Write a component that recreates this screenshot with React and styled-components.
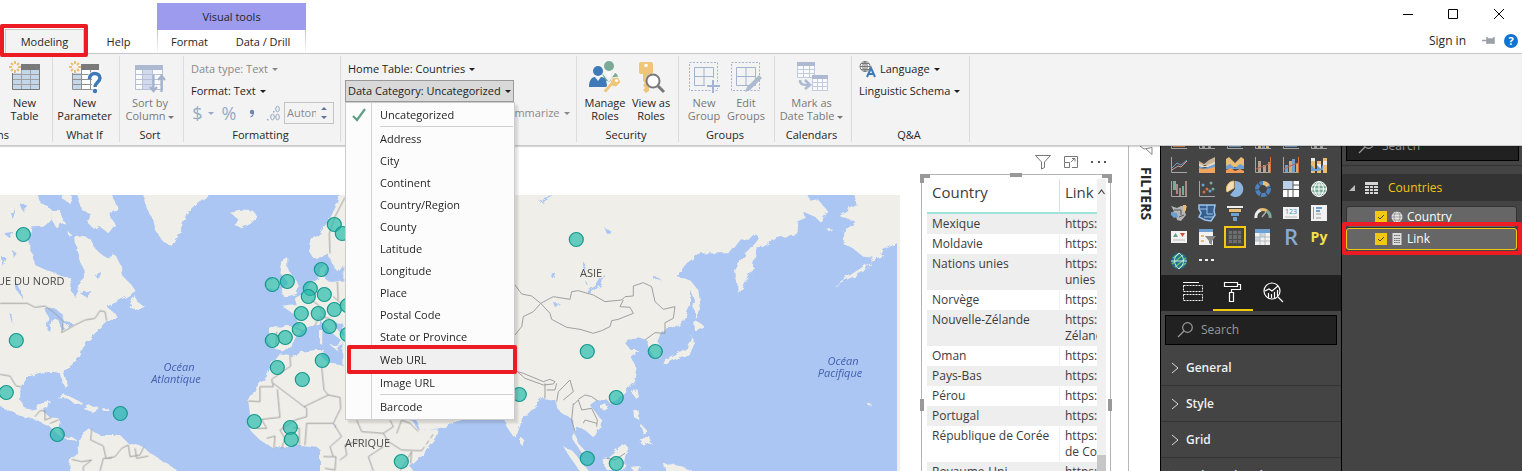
import React from "react";
import styled, { createGlobalStyle } from "styled-components";

const GlobalStyle = createGlobalStyle`
  * {
    box-sizing: border-box;
  }
  body {
    margin: 0;
    background: #fff;
    color: #262626;
    font-family: "Open Sans", "Noto Sans", sans-serif;
    font-size: 12px;
    line-height: 16px;
  }
  button,
  input {
    font: inherit;
    color: inherit;
    margin: 0;
    padding: 0;
    border: 0;
    background: none;
  }
  svg {
    display: block;
    flex: none;
  }
`;

const Shell = styled.div`
  display: flex;
  flex-direction: column;
  height: 100vh;
  overflow: hidden;
`;

/* ---------- header ---------- */
const Header = styled.header`
  display: flex;
  justify-content: space-between;
  height: 54px;
  border-bottom: 1px solid #c8c8c8;
`;
const TabStrip = styled.nav`
  display: flex;
  align-items: flex-end;
`;
const Tab = styled.button`
  position: relative;
  height: ${(props) => (props.$active ? 24 : 23)}px;
  width: ${(props) => props.$width}px;
  font-size: 11px;
  text-align: center;
  white-space: nowrap;
  margin-left: ${(props) => (props.$active ? 5 : 0)}px;
  background: ${(props) => (props.$active ? "#f3f3f3" : "none")};
  border: ${(props) => (props.$active ? "1px solid #c8c8c8" : "0")};
  border-bottom: 0;
`;
const Mark = styled.span`
  position: absolute;
  inset: ${(props) => props.$inset};
  border: 4px solid #ed1c24;
  border-radius: 2px;
  z-index: 5;
  pointer-events: none;
`;
const ToolTabs = styled.div`
  display: flex;
  flex-direction: column;
  align-self: stretch;
  padding-top: 3px;
  margin-left: 4px;
`;
const ToolTitle = styled.div`
  height: 27px;
  line-height: 28px;
  font-size: 11px;
  text-align: center;
  background: #9d9bee;
`;
const ToolRow = styled.div`
  display: flex;
  border: solid;
  border-width: 0 1px;
  border-image: linear-gradient(#c0c0c0, #fff) 1;
`;
const Corner = styled.div`
  display: flex;
  flex-direction: column;
  justify-content: space-between;
  align-items: flex-end;
`;
const WindowButtons = styled.div`
  display: flex;
`;
const WindowButton = styled.button`
  display: flex;
  justify-content: center;
  align-items: center;
  width: 46px;
  height: 28px;
`;
const SignIn = styled.div`
  display: flex;
  align-items: center;
  gap: 8px;
  height: 24px;
  padding-right: 4px;
`;
const SignLink = styled.a`
  color: #262626;
  text-decoration: none;
  margin-right: 8px;
`;

/* ---------- ribbon ---------- */
const Ribbon = styled.section`
  position: relative;
  z-index: 1;
  display: flex;
  height: 92px;
  flex: none;
  padding: 2px 0 3px;
  background: #f3f3f3;
  border-bottom: 1px solid #c8c8c8;
  box-shadow: 0 1px 1px rgba(0, 0, 0, 0.15);
`;
const Group = styled.div`
  display: flex;
  flex-direction: column;
  justify-content: space-between;
  flex: none;
  width: ${(props) => props.$width}px;
  padding-top: 2px;
  border-right: 1px solid #dcdcdc;
`;
const GroupLabel = styled.div`
  font-size: 11px;
  line-height: 14px;
  text-align: center;
  white-space: nowrap;
  padding-right: 3px;
`;
const GroupRow = styled.div`
  display: flex;
  justify-content: center;
  padding: 2px 3px 0 0;
`;
const BigButton = styled.button`
  display: flex;
  flex-direction: column;
  align-items: center;
  gap: 2px;
  width: ${(props) => props.$width || 50}px;
  font-size: 11px;
  line-height: 13px;
  white-space: nowrap;
  opacity: ${(props) => (props.$off ? 0.6 : 1)};
`;
const Lines = styled.div`
  display: flex;
  flex-direction: column;
  align-items: flex-start;
  padding-left: 4px;
`;
const CutLabel = styled.div`
  font-size: 11px;
  line-height: 14px;
  margin-left: -3px;
`;
const LineButton = styled.button`
  position: relative;
  display: flex;
  align-items: center;
  gap: 4px;
  height: 22px;
  font-size: 11px;
  white-space: nowrap;
  color: ${(props) => (props.$off ? "#8a8a8a" : "#1e1e1e")};
  background: ${(props) => (props.$open ? "#d9d9d9" : "none")};
  border: ${(props) => (props.$open ? "1px solid #999" : "0")};
  padding: ${(props) => (props.$open ? "0 2px" : "0 3px")};
`;
const Arrow = styled.span`
  display: inline-block;
  vertical-align: middle;
  border: solid transparent;
  border-width: 3px 3px 0;
  border-top-color: currentColor;
`;
const FormatRow = styled.div`
  display: flex;
  align-items: center;
  height: 22px;
  padding-left: 3px;
  color: #9aa9c4;
  font-size: 18px;
`;
const Glyph = styled.button`
  display: flex;
  align-items: center;
  justify-content: center;
  gap: 5px;
  width: ${(props) => props.$width}px;
`;
const Spinner = styled.div`
  display: flex;
  align-items: center;
  justify-content: space-between;
  width: 50px;
  height: 22px;
  padding: 0 6px 0 2px;
  border: 1px solid #c4c4c4;
`;
const SpinInput = styled.input`
  width: 29px;
  font-size: 11px;
  color: #8a8a8a;
`;

/* ---------- category menu ---------- */
const MenuAnchor = styled.div`
  position: relative;
`;
const Menu = styled.ul`
  position: absolute;
  top: 22px;
  left: 0;
  z-index: 4;
  width: 170px;
  margin: 0;
  padding: 1px;
  list-style: none;
  background: linear-gradient(90deg, transparent 25px, #d4d4d4 25px, #d4d4d4 26px, transparent 26px) #fcfcfc;
  border: 1px solid #ccc;
  box-shadow: 3px 3px 2px rgba(0, 0, 0, 0.12);
`;
const MenuItem = styled.li`
  position: relative;
  display: flex;
  align-items: center;
  height: ${(props) => (props.$hot ? 24 : 22)}px;
  font-size: 11px;
`;
const MenuButton = styled.button`
  display: grid;
  grid-template-columns: 33px 1fr;
  align-items: center;
  width: 100%;
  height: 100%;
  text-align: left;
  background: ${(props) => (props.$hot ? "#f0f0f0" : "none")};
`;
const TickCell = styled.span`
  padding-left: 5px;
`;
const Divider = styled.li`
  height: 2px;
  margin-left: 33px;
  border-top: 1px solid #d0d0d0;
`;

/* ---------- canvas ---------- */
const Body = styled.main`
  display: flex;
  flex: 1;
  min-height: 0;
`;
const Canvas = styled.section`
  display: flex;
  gap: 21px;
  flex: 1;
  min-width: 0;
  padding-right: 17px;
`;
const MapBox = styled.div`
  flex: 1;
  min-width: 0;
  margin-top: 49px;
  overflow: hidden;
  background: #abc6f2;
  border-right: 3px solid #efeee9;
`;
const Visual = styled.div`
  display: flex;
  flex-direction: column;
  width: 190px;
`;
const VisualTools = styled.div`
  display: flex;
  justify-content: flex-end;
  align-items: center;
  gap: 12px;
  height: 28px;
  padding: 4px 4px 0 0;
`;
const Frame = styled.div`
  position: relative;
  display: flex;
  flex: 1;
  min-height: 0;
  padding: 4px 4px 0 5px;
  border: 1px solid #b4b4b4;
  border-bottom: 0;
`;
const Handle = styled.span`
  position: absolute;
  ${(props) => props.$at}
  width: ${(props) => props.$w}px;
  height: ${(props) => props.$h}px;
  border: solid #999;
  border-width: ${(props) => props.$edges};
`;
const TableClip = styled.div`
  width: 170px;
  overflow: hidden;
`;
const DataTable = styled.table`
  width: 220px;
  table-layout: fixed;
  border-collapse: separate;
  border-spacing: 0;
  color: #3c3c3c;
`;
const Head = styled.th`
  height: 35px;
  width: ${(props) => props.$width}px;
  padding: 0 5px 8px;
  font-size: 15px;
  font-weight: 400;
  text-align: left;
  border-bottom: 2px solid #9fe5dd;
  border-right: 1px solid #b9efe9;
`;
const Cell = styled.td`
  padding: 2px 5px;
  vertical-align: top;
  white-space: nowrap;
  border-right: 1px solid #e6f5f3;
`;
const Row = styled.tr`
  background: ${(props) => (props.$odd ? "#fff" : "#eee")};
`;
const Scroll = styled.div`
  display: flex;
  flex-direction: column;
  justify-content: space-between;
  align-items: center;
  width: 9px;
  padding-top: 10px;
  background: #f0f0f0;
`;
const Thumb = styled.div`
  width: 9px;
  height: 16px;
  background: #c6c6c6;
`;

/* ---------- side panes ---------- */
const FilterPane = styled.aside`
  display: flex;
  flex-direction: column;
  align-items: center;
  gap: 12px;
  width: 32px;
  padding-left: 3px;
  border-left: 1px solid #b8b8b8;
`;
const FilterTitle = styled.div`
  writing-mode: vertical-rl;
  font-size: 14px;
  font-weight: 700;
`;
const Pane = styled.aside`
  width: 181px;
  overflow: hidden;
  color: #d6d6d6;
  background: #444;
  border-left: 1px solid #000;
`;
const VizGrid = styled.div`
  display: grid;
  grid-template-columns: repeat(6, 28px);
  grid-auto-rows: 24px;
  margin: -17px 0 0 4px;
  height: 146px;
`;
const VizButton = styled.button`
  display: flex;
  align-items: center;
  justify-content: center;
  margin: 1px 3px;
  border: ${(props) => (props.$picked ? "2px solid #f2c811" : "0")};
`;
const PaneTabs = styled.div`
  display: flex;
  height: 36px;
  padding-left: 12px;
  background: #212121;
`;
const PaneTab = styled.button`
  display: flex;
  align-items: center;
  justify-content: center;
  width: 40px;
  border-bottom: 2px solid ${(props) => (props.$active ? "#f2c811" : "#212121")};
`;
const SearchBox = styled.label`
  display: flex;
  align-items: center;
  gap: 8px;
  height: 30px;
  margin: ${(props) => props.$margin};
  padding: 0 11px;
  color: #999;
  background: #212121;
  border: 1px solid #000;
`;
const SearchInput = styled.input`
  width: 100%;
  min-width: 0;
  &::placeholder {
    color: #999;
    opacity: 1;
  }
`;
const Section = styled.button`
  display: flex;
  align-items: center;
  gap: 7px;
  width: 100%;
  height: 36px;
  padding: 1px 0 0 10px;
  font-weight: 600;
  color: #f0f0f0;
  border-bottom: 1px solid #333;
`;
const TableHead = styled.button`
  display: flex;
  align-items: center;
  gap: 10px;
  width: 100%;
  height: 27px;
  margin-top: 8px;
  padding-left: 7px;
  color: #f2c811;
  background: #333;
`;
const FieldList = styled.div`
  display: flex;
  flex-direction: column;
  padding: 5px 5px 0 4px;
`;
const Field = styled.label`
  position: relative;
  display: flex;
  align-items: center;
  gap: 4px;
  height: 22px;
  padding-left: 28px;
  color: #fff;
  background: #666;
  border: 1px solid ${(props) => (props.$picked ? "#f2c811" : "#333")};
  border-radius: 3px;
`;
const Check = styled.input`
  appearance: none;
  width: 12px;
  height: 12px;
  background: #f2c811
    url("data:image/svg+xml,%3Csvg xmlns='http://www.w3.org/2000/svg' viewBox='0 0 12 12'%3E%3Cpath d='M3 6l2 2 4-4' fill='none' stroke='%23444'/%3E%3C/svg%3E");
`;
const Rule = styled.div`
  height: 1px;
  margin-top: 4px;
  background: #333;
`;

/* ---------- ribbon icons ---------- */
const Star = () => (
  <path
    d="M7 1v3M7 10v3M1 7h3M10 7h3M3 3l2 2M9 9l2 2M11 3l-2 2M5 9l-2 2"
    stroke="#e9bf73"
    strokeWidth="2"
    fill="none"
  />
);

const NewTableIcon = () => (
  <svg width="34" height="34" viewBox="0 0 34 34">
    <path d="M4 5h28v25H4z" fill="#c3d7e8" />
    <path d="M4 14.500h28M4 19.500h28M4 24.500h28M13.500 10v20M22.500 10v20" stroke="#a0a0a0" />
    <path d="M4.500 5v24.500h27V5" fill="none" stroke="#7a7a7a" />
    <path d="M13 4h19v6H13z" fill="#7a7a7a" />
    <path d="M1 1h12v12H1z" fill="#f3f3f3" />
    <Star />
  </svg>
);

const ParameterIcon = () => (
  <svg width="34" height="34" viewBox="0 0 34 34">
    <path d="M4 5h26v24H4z" fill="#fff" />
    <path d="M4 5h9v24H4z" fill="#c3d7e8" />
    <path d="M4 14.500h26M4 19.500h20M4 24.500h20M13.500 10v20M22.500 10v20M4.500 5v24.500h20" stroke="#909090" fill="none" />
    <path d="M13 4h18v6H13z" fill="#7a7a7a" />
    <path d="M1 1h12v12H1z" fill="#f3f3f3" />
    <Star />
    <path d="M21.500 19c0-7.500 10.500-7 10.500-1 0 4-5 4.500-5 9" stroke="#fff" strokeWidth="5" fill="none" />
    <path d="M21.500 19c0-7.500 10.500-7 10.500-1 0 4-5 4.500-5 9" stroke="#3f7ab8" strokeWidth="3.500" fill="none" />
    <circle cx="27" cy="31" r="2.200" fill="#3f7ab8" />
  </svg>
);

const SortIcon = () => (
  <svg width="34" height="34" viewBox="0 0 34 34">
    <path d="M2 6h28v23H2z" fill="#fff" />
    <path d="M10 10h9v19h-9z" fill="#bccbe8" />
    <path d="M2 14.500h28M2 19.500h28M2 24.500h28M9.500 10v19M19.500 10v19M2.500 5v24.500h27V5" stroke="#8ca0c4" fill="none" />
    <path d="M2 5h28v5H2z" fill="#7d93bc" />
    <path d="M20.500 15v16M17 27l3.500 4 3.500-4M28.500 32V16M25 20l3.500-4 3.500 4" stroke="#7088b5" strokeWidth="2.200" fill="none" />
  </svg>
);

const ManageRolesIcon = () => (
  <svg width="34" height="34" viewBox="0 0 34 34">
    <circle cx="21" cy="6" r="5" fill="#7bab97" />
    <path d="M14 13l7 9 6-9c3 1 4 5 3 8h-13z" fill="#7bab97" />
    <path d="M18 12l3 6 3-6z" fill="#fff" />
    <circle cx="10" cy="11" r="5" fill="#3f7ab8" />
    <path d="M1 27c0-7 3-10 6-10l3 4 3-4c4 0 6 4 6 10z" fill="#3f7ab8" />
    <path d="M24 18l6-1 3 5-5 5-4-1-6 7-3-2 7-8z" fill="#efc679" stroke="#f3f3f3" />
    <circle cx="28.500" cy="20.500" r="1.500" fill="#fff" />
  </svg>
);

const ViewAsIcon = () => (
  <svg width="34" height="34" viewBox="0 0 34 34">
    <path d="M5 4q0-2 2-2h10q2 0 2 2v8q0 2-2 2h-2v17l-3 2-3-3 2-2-2-3 2-2-2-2v-7H7q-2 0-2-2z" fill="#efc679" />
    <circle cx="12" cy="5.500" r="1.800" fill="#fff" />
    <circle cx="19" cy="21" r="6.500" fill="#fff" stroke="#7a7a7a" strokeWidth="2" />
    <path d="M24 26l6 6" stroke="#7a7a7a" strokeWidth="3" />
  </svg>
);

const GroupIcon = ({ edit }) => (
  <svg width="34" height="34" viewBox="0 0 34 34">
    <path d="M2.500 2.500h28v28h-28z" fill="none" stroke="#6f89b9" strokeDasharray="2 1.500" />
    <path d="M7.500 7.500h19v18h-19zM17 7.500v18M7.500 16.500h19" fill="none" stroke="#6f89b9" />
    {edit ? (
      <path d="M30 15l3 3-12 12-5 2 2-5z" fill="#7d93bc" />
    ) : (
      <>
        <path d="M26 18v16M18 26h16" stroke="#f3f3f3" strokeWidth="4" />
        <path d="M26 20v13M20 26h13" stroke="#6f89b9" strokeWidth="2" />
      </>
    )}
  </svg>
);

const CalendarIcon = () => (
  <svg width="34" height="34" viewBox="0 0 34 34">
    <path d="M2 3h18v15H2zM17 16h16v15H17z" fill="#fff" />
    <path d="M2 9.500h18M2 13.500h18M8.500 6v12M14.500 6v12M2.500 3v14.500h17V3M17 22.500h16M17 26.500h16M22.500 19v12M27.500 19v12M17.500 16v14.500h15V16" fill="none" stroke="#9fb2d4" />
    <path d="M2 2h18v4H2zM17 15h16v4H17z" fill="#7d93bc" />
    <path d="M5 20c0 5 4 5 8 5M10 20l5 5-5 4" fill="none" stroke="#7d93bc" strokeWidth="2.500" />
  </svg>
);

const LanguageIcon = () => (
  <svg width="17" height="17" viewBox="0 0 17 17">
    <path d="M6 .5a5 5 0 1 0 .1 0M6 .5v10M1 5.500h10M2 2.500h8M2 8.500h8M6 .5c-3 3-3 7 0 10M6 .5c3 3 3 7 0 10" fill="none" stroke="#777" />
    <path d="M8 16l4-9 4 9M9.500 13h5" fill="none" stroke="#3f7ab8" strokeWidth="2" />
  </svg>
);

const DecimalIcon = () => (
  <svg width="16" height="16" viewBox="0 0 16 16">
    <g fill="none" stroke="#9aa9c4">
      <ellipse cx="12.500" cy="4" rx="1.800" ry="2.800" />
      <ellipse cx="7.500" cy="12" rx="1.800" ry="2.800" />
      <ellipse cx="12.500" cy="12" rx="1.800" ry="2.800" />
    </g>
    <path d="M8 6h1.500v1.500H8zM2 14h1.500v1.500H2z" fill="#9aa9c4" />
  </svg>
);

const CommaIcon = () => (
  <svg width="6" height="9" viewBox="0 0 6 9">
    <circle cx="3" cy="3" r="2.200" fill="#7088b5" />
    <path d="M4.500 3q0 4-3 5" stroke="#7088b5" strokeWidth="1.200" fill="none" />
  </svg>
);

const TickIcon = () => (
  <svg width="14" height="14" viewBox="0 0 14 14">
    <path d="M1 8l4 4 8-11" fill="none" stroke="#5f9f86" strokeWidth="2.200" />
  </svg>
);

const MagnifierIcon = () => (
  <svg width="16" height="16" viewBox="0 0 16 16">
    <circle cx="10.500" cy="5.500" r="4.800" fill="none" stroke="#999" strokeWidth="1.200" />
    <path d="M7 9l-6 6" stroke="#999" strokeWidth="1.200" />
  </svg>
);

const FunnelIcon = () => (
  <svg width="16" height="16" viewBox="0 0 16 16">
    <path d="M.5 1.500h15L9.500 8v5.500l-3 1.500V8z" fill="none" stroke="#777" />
  </svg>
);

/* ---------- visualisation icons, 18x18 each ---------- */
const Axis = () => <path d="M1.500 1v15.500H17" stroke="#a6a6a6" fill="none" />;
const blue = "#6d9fd0";
const sand = "#e8bd74";

const vizIcons = [
  <><Axis /><path d="M3 7h9v3H3zM3 12h12v3H3z" fill="#d9844d" /></>,
  <><Axis /><path d="M4 5h3v11H4zM10 8h3v8h-3z" fill="#a6a6a6" /></>,
  <><Axis /><path d="M3 7h9v3H3zM3 12h12v3H3z" fill={blue} /></>,
  <><Axis /><path d="M4 5h3v11H4zM12 8h3v8h-3z" fill={sand} /><path d="M8 7h3v9H8z" fill={blue} /></>,
  <><Axis /><path d="M3 7h9v3H3zM3 12h12v3H3z" fill={blue} /></>,
  <><Axis /><path d="M4 5h3v11H4zM10 8h3v8h-3z" fill="#a6a6a6" /></>,

  <><Axis /><path d="M2 12l5-5 4 2 6-5" stroke={blue} fill="none" /><path d="M2 14l6-4 3 1 6-6" stroke="#d99a8a" fill="none" /></>,
  <><path d="M1 5l5 3 5-4 6-3v8H1z" fill="#c9b394" /><path d="M1 8l6 2 10-4v5H1z" fill="#e9ddc8" /><path d="M1 12l6 1 10-3v7H1z" fill="#f0a45e" /><path d="M1 10l6 2 10-4v3l-9 2-7-1z" fill={blue} /></>,
  <><path d="M0 3l3-2 6 6 6-6 3 2v8H0z" fill={sand} /><path d="M0 10l4-2 5 4 5-4 4 2v3H0z" fill={blue} /><path d="M0 17v-3l5-2 4 3 5-2 4 2v2z" fill="#f39a55" /></>,
  <><Axis /><path d="M4 5h3v11H4zM9 9h3v7H9zM14 6h2v10h-2z" fill="#b7a48a" /><path d="M2 13l5-2 4-1 5-3" stroke="#c65f4a" fill="none" /><path d="M16.500 1v16" stroke="#d2703a" /></>,
  <><Axis /><path d="M3 9h3v7H3zM10 3h3v13h-3z" fill={blue} /><path d="M7 5h3v11H7zM14 7h2v9h-2z" fill="#d0ae74" /><path d="M2 13l6-3 8-3" stroke="#c65f4a" fill="none" /><path d="M16.500 1v16" stroke="#d2703a" /></>,
  <><path d="M1 2h4v15H1zM7 5h4v12H7zM13 2h4v15h-4z" fill={sand} /><path d="M1 2h4v3H1zM7 8h4v4H7zM13 5h4v4h-4z" fill="#e8e8e8" /><path d="M1 9l4 4h2V9l4 4 2-5v6l-6 1H1z" fill={blue} /></>,

  <><Axis /><path d="M3 1h3v9H3zM12 6h2v9h-2z" fill="#7bab97" /><path d="M6 4h2v10H6zM9 8h2v8H9zM15 1h2v15h-2z" fill="#a88" /></>,
  <><Axis /><g fill={blue}><circle cx="5" cy="5" r="1.500" /><circle cx="12" cy="11" r="1.500" /></g><g fill="#d2703a"><circle cx="9" cy="9" r="1.500" /><circle cx="6" cy="12" r="1.500" /></g><g fill="#7bab97"><circle cx="13" cy="3" r="1.500" /><circle cx="15" cy="9" r="1.500" /></g></>,
  <><path d="M9 9V1a8 8 0 1 1-5 14z" fill="#8db4dc" /><path d="M8 8L1 12A8 8 0 0 1 8 1z" fill="#f5dfb2" stroke={sand} /></>,
  <><circle cx="9" cy="9" r="6" fill="none" stroke="#4d82bd" strokeWidth="4" strokeDasharray="5 1" /><path d="M9 3a6 6 0 0 1 5 3" stroke={sand} strokeWidth="4" fill="none" /></>,
  <><path d="M1 1h16v16H1z" fill="#fff" /><path d="M1 1h10v8H1z" fill="#bcd0e8" /><path d="M11 1v16M1 9.500h16M6 9v8M11 5h6" stroke="#555" /></>,
  <><circle cx="9" cy="9" r="7.500" fill="#7bab97" stroke="#fff" /><path d="M1 9h16M9 1v16M3 5h12M3 13h12M9 1C3 6 3 12 9 17M9 1c6 5 6 11 0 16" stroke="#fff" fill="none" /></>,

  <><path d="M1 2l6 2 4-2 6 0-2 6 1 3-5 6-4-1-1-4-5-2 3-3z" fill="#b5b5b5" /><path d="M1 8l6 1 1 4-4 1-3-3z" fill={blue} /><path d="M13 1h3v5l-3 3z" fill={sand} /><path d="M4 6h7v5M9 13l5-2" stroke="#555" fill="none" /></>,
  <><path d="M1 1h16l-1 6 1 4-4 6-6-1-6-3 2-4-2-4z" fill="#35608f" stroke="#9fc3e8" strokeWidth="1.500" /><path d="M2 5h7v5h6M6 13h10M9 1v4" stroke="#9fc3e8" fill="none" /></>,
  <><path d="M1 2h16v2H1z" fill="#eee" /><path d="M3 5h12v3H3z" fill={sand} /><path d="M5 9h8v3H5zM7 13h4v4H7z" fill={blue} /></>,
  <><path d="M2 14a7 7 0 0 1 5-8" stroke="#eee" strokeWidth="3" fill="none" /><path d="M6 6a7 7 0 0 1 7 1" stroke={sand} strokeWidth="3" fill="none" /><path d="M13 7a7 7 0 0 1 3 7" stroke="#7bab97" strokeWidth="3" fill="none" /><path d="M12 8l-4 5" stroke="#aaa" strokeWidth="1.500" /></>,
  <><path d="M1 3h16v12H1z" fill="#f2f2f2" /><text x="9" y="10" fontSize="7" fill="#4d82bd" textAnchor="middle">123</text><path d="M3 13h12" stroke="#bbb" /></>,
  <><path d="M1 1h16v16H1z" fill="#f2f2f2" /><path d="M3.500 3v12M6 10h5M6 14h5" stroke="#999" /><path d="M6 4h6M6 7h4" stroke={blue} strokeWidth="2" /></>,

  <><path d="M1 3h16v12H1z" fill="#f2f2f2" /><path d="M3 9l2.500-4L8 9z" fill="#5f9f86" /><path d="M10 5h5l-2.500 4z" fill="#d2503a" /><path d="M3 12h12" stroke="#bbb" /></>,
  <><path d="M1 1h14v16H1z" fill="#f2f2f2" /><path d="M1 1h14v3H1z" fill={blue} /><path d="M3 7h3v2H3zM3 12h3v2H3z" fill={sand} /><path d="M7 8h11l-4 5v4l-3-2v-2z" fill="#888" /></>,
  <><path d="M2 2h14v14H2z" fill="#6e6e6e" /><path d="M2 6.500h14M2 11.500h14M6.500 2v14M11.500 2v14M2.500 2.500h13v13h-13z" stroke="#4c4c4c" fill="none" /></>,
  <><path d="M1 1h15v16H1z" fill="#f2f2f2" /><path d="M1 1h15v4H1z" fill={blue} /><path d="M6 5h5v4H6zM1 9h5v4H1z" fill="#c3d7e8" /><path d="M1 9h15M1 13h15M6 5v12M11 5v12" stroke="#bbb" /></>,
  <text x="9" y="17" fontSize="22" fontWeight="600" fill="#86aad3" textAnchor="middle">R</text>,
  <text x="9" y="14" fontSize="14" fontWeight="700" fill="#f5e04d" textAnchor="middle">Py</text>,

  <><circle cx="9" cy="9" r="8" fill="#1f6f8f" /><path d="M3 6l6-4M2 12L13 3M5 15L16 6M9 16l7-5" stroke="#6fc26a" strokeWidth="1.500" /><path d="M9 1C2 6 4 13 9 17M9 1c7 5 5 12 0 16M1 9h16" stroke="#c9e5f2" fill="none" /></>,
  <path d="M1 7h3v2H1zM7 7h3v2H7zM13 7h3v2h-3z" fill="#eee" />,
];

/* ---------- map ---------- */
const bubbles = [
  [23, 39], [16, 145], [6, 197], [57, 239], [120, 218], [334, 29], [342, 38],
  [321, 74], [272, 89], [287, 86], [310, 93], [308, 101], [324, 99], [301, 118],
  [318, 118], [334, 114], [299, 134], [329, 131], [272, 145], [285, 142],
  [347, 110], [347, 139], [322, 165], [277, 172], [302, 184], [254, 226],
  [290, 232], [291, 244], [401, 266], [519, 199], [576, 44], [587, 156],
  [655, 156], [616, 202], [587, 263], [616, 268],
];

const WorldMap = () => (
  <svg width="899" height="276" viewBox="0 0 899 276">
    <defs>
      <filter id="coast" x="0" y="0" width="100%" height="100%">
        <feTurbulence type="fractalNoise" baseFrequency="0.12" numOctaves="3" seed="4" />
        <feDisplacementMap in="SourceGraphic" scale="6" />
      </filter>
    </defs>
    <g filter="url(#coast)" fill="#efeee9">
      <g transform="translate(0 -5) scale(.3333)">
        <path d="M-30 0H105L122 40L150 55L155 90L130 110L95 112L85 150V175L100 195L105 225L150 245L190 260L210 262L212 300L228 325L240 300L235 290L250 265L258 250L240 215L230 180L225 140L245 135L275 150L285 175L300 190L325 205L335 190L345 195L360 225L370 260L395 285L407 303L380 320L345 338L320 350L345 370L350 380L325 395L285 430L250 470L240 500L215 525L190 545L205 590L200 598L185 575L180 550L160 545L120 548L85 560L62 590L60 630L75 655L100 660L130 635L150 632L145 655L130 665L150 682L175 685L182 700L178 715L190 745L215 740L230 750L205 752L175 735L150 710L110 690L70 680L35 665L-30 640Z" />
        <path d="M232 765L240 740L270 718L300 735L360 735L385 760L430 770L450 790L500 820L560 860H205L210 810L235 790Z" />
        <path d="M225 0H330L355 60L330 70L345 105L325 130L300 110L285 120L260 95L270 70L245 60ZM150 60H180L195 100L170 115L155 90ZM190 0H215L210 40L185 25ZM205 125L215 135L208 140ZM430 0H650L590 40L560 70L545 110L515 168L490 155L465 120L455 80L440 55ZM690 68L722 62L760 62L770 80L755 100L725 115L700 102L715 88ZM385 350L405 315L412 335L435 350L415 358ZM170 625L200 615L250 640L225 642L200 625ZM245 655L270 645L300 655L275 665ZM310 658H328V663H310ZM845 210L862 202V230L880 260L897 290L890 312L850 322L845 300L865 280L838 245ZM800 275L820 260L838 275L825 300L800 298ZM957 420H967V460H957ZM990 465L1020 470L1012 482Z" />
        <path d="M1100 0H1030L1010 45L990 85L960 130L930 155L925 180L940 205L970 200L985 190L1000 230L1015 247L1035 220L1100 180ZM955 270V245L972 218L980 228L975 270Z" />
        <path d="M1100 262L1000 275L960 262L930 285L910 310L885 325L890 345L848 350L885 375L897 405L880 412L810 408L805 450L812 470L830 480L855 485L880 465L885 445L905 425L925 410L945 405L965 395L985 420L1022 450L1010 470L1028 462L1035 445L1010 415L1000 395L1025 400L1100 460Z" />
        <path d="M1100 560L1020 525L985 520L968 502L972 480L945 480L900 487L870 495L835 490L815 520L800 560L770 590L745 635L750 670L740 690L755 725L780 750L825 778L870 770L900 765L950 770L972 790L965 820L990 860H1250L1050 520Z" />
      </g>
      <g transform="translate(340 65) scale(.3333)">
        <path d="M-60 400L215 480L235 510L297 508L290 535L250 585L205 625L200 660H-60ZM215 440L240 512L300 505L360 485L405 475ZM540 528L552 540L548 558L540 550Z" />
      </g>
      <g transform="translate(510 -5) scale(.3333)">
        <path d="M-500 0H885L905 35L925 30L955 65L930 95L915 80L880 65L885 85L860 95L867 130L800 145L760 170L740 172L735 200L725 245L688 312L680 285L672 240L690 205L720 175L745 140L735 130L715 150L690 145L655 190L570 190L530 220L500 258L545 275L555 290L550 330L520 390L495 410L470 415L440 450L452 470L455 500L435 505L415 470L410 450L385 442L348 462L362 480L385 480L362 500L382 540L375 575L340 615L300 635L260 630L240 645L275 690L270 715L250 742L225 720L200 710L190 725L205 760L232 790L215 788L190 750V690L175 680L150 665L135 630L100 625L35 690L30 710L15 745L-10 710L-30 650L-130 640H-500Z" />
        <path d="M1200 0H1030L1040 45L985 75L1037 95L1000 125L998 160L1035 180L1060 200L1092 203L1060 245L970 288L1075 220L1110 205L1120 180L1200 140ZM550 285L565 300L572 350L555 385L548 330ZM552 388L582 408L555 424ZM545 438L553 462L540 492L500 505L460 528L465 508L500 490L530 475ZM375 598L385 600L376 625L368 612ZM370 660H386L388 690L372 682ZM388 755L415 735L425 755L405 770ZM390 700L410 720L400 735ZM160 770L190 785L250 860H220ZM275 805L300 800L345 762L355 775L345 800L340 840H290ZM365 830L390 828L375 860ZM465 825L490 822L555 845L540 860L470 850ZM270 645H290V655H270ZM948 115L970 120L960 127ZM1070 640L1088 645L1080 650Z" />
      </g>
    </g>
    <g filter="url(#coast)" fill="#abc6f2">
      <g transform="translate(0 -5) scale(.3333)">
        <path d="M130 350L160 355L185 370L195 405L185 425L175 390L160 385L150 425L142 420L148 385ZM190 395L220 400L205 410ZM30 65L45 55L35 85ZM60 40L85 50L70 65ZM5 200L20 205L10 230ZM40 265L60 300L70 330L50 300ZM10 130L40 125L30 145ZM35 180L50 190L40 205ZM28 370L38 375L36 400ZM240 310L270 300L265 325ZM285 255L305 245L295 270ZM1000 700L1010 705L1005 715Z" />
      </g>
      <g transform="translate(510 -5) scale(.3333)">
        <path d="M283 248L275 285L240 310L230 305L260 285ZM280 110L305 125L290 130ZM90 40L100 20L130 15L105 28ZM220 215L232 230L225 245ZM125 255L140 250L130 270ZM130 340H150L135 352ZM430 260L450 265L435 272ZM225 270L235 285L228 282ZM555 335L540 300V375L500 420L470 445L485 460L520 420Z" />
      </g>
    </g>
    <g fill="none" stroke="#9a9a98" strokeWidth="2.800" strokeLinejoin="round">
      <g transform="translate(0 -5) scale(.3333)">
        <path d="M0 340H82L105 352L135 348L165 370L190 395L185 428L225 405L255 390L285 385L300 362L315 365L320 392M0 553L30 558L48 588L62 590M105 680L120 662H135V690L155 682M150 700L175 690M180 725L195 735M275 718L272 750L310 768L318 805L345 800L365 775L385 765M385 765L390 800L420 795L432 770M405 775L410 805L445 798M215 808L245 815L275 810L250 830V843M300 843L310 805L335 805" />
        <path d="M990 190L988 130L1005 80L1035 22M1012 275L1015 330M870 498L872 528L815 568L820 590H780V635L745 633M820 580L912 650L985 615L972 600L965 530M832 598L840 682L785 688M912 650L920 655V680L885 690L840 720M985 615L1020 622L1022 655L1000 700H920L915 765M785 688L800 715L770 715M800 745L825 738L822 775M840 720L855 745L845 775M880 712L898 715V765M970 800H1008L1005 840L975 835M1000 700L1025 740L990 770L1000 800M885 412L912 425M830 425L828 465M935 330L955 345L975 380M1000 320L1030 345M945 405L960 380L990 385" />
      </g>
      <g transform="translate(340 65) scale(.3333)">
        <path d="M50 480L65 515L130 520L145 545L185 570L245 572M170 520L185 480L210 490L235 515M130 520L160 500L150 480M0 600L20 585L15 555L60 540M100 633L85 590L130 560M180 633L215 575L212 610" />
        <path d="M245 572L285 515" strokeDasharray="14 9" />
      </g>
      <g transform="translate(510 -5) scale(.3333)">
        <path d="M15 285L35 312L65 318L92 340L130 320L180 328L185 305L205 302L250 315L285 335L335 330L345 320L370 318V288L400 278L425 290L435 335L460 358L495 350L490 385L465 398V430L435 428L405 450M92 340L120 370L125 388L170 412L210 418L250 430L275 422L300 410L305 392L325 388L370 370L360 352L330 350L340 330M15 435L35 410L40 380L70 365L92 340M22 545L40 550L100 575L120 568L135 575L130 582L100 585L45 565ZM105 580V625M110 600H135L140 580M140 635L145 605L180 570L190 605L160 630M205 628L225 615L245 620L262 632M190 640L185 690L195 725M205 630L215 660L245 655L262 690L260 710M190 645L205 630M220 700L225 690L260 700M290 805L315 810L345 790" />
      </g>
    </g>
    <g fill="#22b9ab" fillOpacity=".68" stroke="#16988b" strokeWidth="1.200">
      {bubbles.map(([x, y], i) => (
        <circle key={i} cx={x + 0.3} cy={y + 0.5} r="7" />
      ))}
    </g>
    <g fontSize="11" fill="#4a4a4a">
      <text x="-3" y="90">UE DU NORD</text>
      <text x="580" y="82">ASIE</text>
      <text x="345" y="252">AFRIQUE</text>
    </g>
    <g fontSize="11" fontStyle="italic" fill="#4460b0" textAnchor="middle">
      <text x="179" y="176">Océan</text>
      <text x="176" y="188">Atlantique</text>
      <text x="843" y="170">Océan</text>
      <text x="840" y="182">Pacifique</text>
    </g>
  </svg>
);

const categories = [
  "Address", "City", "Continent", "Country/Region", "County", "Latitude",
  "Longitude", "Place", "Postal Code", "State or Province",
];

const countries = [
  ["Mexique"], ["Moldavie"], ["Nations unies", "unies"], ["Norvège"],
  ["Nouvelle-Zélande", "Zélande"], ["Oman"], ["Pays-Bas"], ["Pérou"],
  ["Portugal"], ["République de Corée", "de Corée"], ["Royaume-Uni"],
];

const CategoryMenu = () => (
  <Menu>
    <MenuItem>
      <MenuButton>
        <TickCell><TickIcon /></TickCell>
        Uncategorized
      </MenuButton>
    </MenuItem>
    <Divider />
    {categories.map((name) => (
      <MenuItem key={name}>
        <MenuButton><span />{name}</MenuButton>
      </MenuItem>
    ))}
    <MenuItem $hot>
      <MenuButton $hot><span />Web URL</MenuButton>
      <Mark $inset="-3px -4px -2px 0" />
    </MenuItem>
    <MenuItem>
      <MenuButton><span />Image URL</MenuButton>
    </MenuItem>
    <Divider />
    <MenuItem>
      <MenuButton><span />Barcode</MenuButton>
    </MenuItem>
  </Menu>
);

function App() {
  return (
    <Shell>
      <GlobalStyle />
      <Header>
        <TabStrip>
          <Tab $width={79} $active>
            Modeling
            <Mark $inset="-6px -5px -4px -6px" />
          </Tab>
          <Tab $width={69}>Help</Tab>
          <ToolTabs>
            <ToolTitle>Visual tools</ToolTitle>
            <ToolRow>
              <Tab $width={63}>Format</Tab>
              <Tab $width={84}>Data / Drill</Tab>
            </ToolRow>
          </ToolTabs>
        </TabStrip>
        <Corner>
          <WindowButtons>
            <WindowButton aria-label="Minimize">
              <svg width="11" height="11"><path d="M1 5.500h10" stroke="#000" /></svg>
            </WindowButton>
            <WindowButton aria-label="Maximize">
              <svg width="11" height="11"><path d="M.5.5h9v9h-9z" stroke="#000" fill="none" /></svg>
            </WindowButton>
            <WindowButton aria-label="Close">
              <svg width="11" height="11"><path d="M0 0l10 10M10 0L0 10" stroke="#000" /></svg>
            </WindowButton>
          </WindowButtons>
          <SignIn>
            <SignLink href="#signin">Sign in</SignLink>
            <svg width="14" height="10" viewBox="0 0 14 10">
              <path d="M0 4.500h5M5 1v7M5 3h6v4H5zM12 1v7" stroke="#9aa0a8" strokeWidth="1.500" fill="#9aa0a8" />
            </svg>
            <svg width="14" height="14" viewBox="0 0 14 14">
              <circle cx="7" cy="7" r="7" fill="#0f74d1" />
              <text x="7" y="11" fontSize="11" fontWeight="700" fill="#fff" textAnchor="middle">?</text>
            </svg>
          </SignIn>
        </Corner>
      </Header>

      <Ribbon>
        <Group $width={53}>
          <GroupRow>
            <BigButton><NewTableIcon /><span>New<br />Table</span></BigButton>
          </GroupRow>
          <CutLabel>ns</CutLabel>
        </Group>
        <Group $width={67}>
          <GroupRow>
            <BigButton><ParameterIcon /><span>New<br />Parameter</span></BigButton>
          </GroupRow>
          <GroupLabel>What If</GroupLabel>
        </Group>
        <Group $width={64}>
          <GroupRow>
            <BigButton $off><SortIcon /><span>Sort by<br />Column <Arrow /></span></BigButton>
          </GroupRow>
          <GroupLabel>Sort</GroupLabel>
        </Group>
        <Group $width={157}>
          <Lines>
            <LineButton $off>Data type: Text <Arrow /></LineButton>
            <LineButton>Format: Text <Arrow /></LineButton>
            <FormatRow>
              <Glyph $width={24}>$ <Arrow /></Glyph>
              <Glyph $width={28}>%</Glyph>
              <Glyph $width={18} aria-label="Thousands separator"><CommaIcon /></Glyph>
              <Glyph $width={23} aria-label="Decimals"><DecimalIcon /></Glyph>
              <Spinner>
                <SpinInput aria-label="Decimal places" defaultValue="Automatic" />
                <svg width="6" height="12" viewBox="0 0 6 12">
                  <path d="M0 3l3-3 3 3zM0 9l3 3 3-3z" fill="#5f7499" />
                </svg>
              </Spinner>
            </FormatRow>
          </Lines>
          <GroupLabel>Formatting</GroupLabel>
        </Group>
        <Group $width={236}>
          <Lines>
            <LineButton>Home Table: Countries <Arrow /></LineButton>
            <MenuAnchor>
              <LineButton $open>Data Category: Uncategorized <Arrow /></LineButton>
              <CategoryMenu />
            </MenuAnchor>
            <LineButton $off>Default Summarization: Don't summarize <Arrow /></LineButton>
          </Lines>
          <GroupLabel>Properties</GroupLabel>
        </Group>
        <Group $width={102}>
          <GroupRow>
            <BigButton><ManageRolesIcon /><span>Manage<br />Roles</span></BigButton>
            <BigButton $width={42}><ViewAsIcon /><span>View as<br />Roles</span></BigButton>
          </GroupRow>
          <GroupLabel>Security</GroupLabel>
        </Group>
        <Group $width={96}>
          <GroupRow>
            <BigButton $off $width={42}><GroupIcon /><span>New<br />Group</span></BigButton>
            <BigButton $off $width={42}><GroupIcon edit /><span>Edit<br />Groups</span></BigButton>
          </GroupRow>
          <GroupLabel>Groups</GroupLabel>
        </Group>
        <Group $width={77}>
          <GroupRow>
            <BigButton $off><CalendarIcon /><span>Mark as<br />Date Table <Arrow /></span></BigButton>
          </GroupRow>
          <GroupLabel>Calendars</GroupLabel>
        </Group>
        <Group $width={118}>
          <Lines>
            <LineButton><LanguageIcon />Language <Arrow /></LineButton>
            <LineButton>Linguistic Schema <Arrow /></LineButton>
          </Lines>
          <GroupLabel>Q&amp;A</GroupLabel>
        </Group>
      </Ribbon>

      <Body>
        <Canvas>
          <MapBox><WorldMap /></MapBox>
          <Visual>
            <VisualTools>
              <FunnelIcon />
              <svg width="16" height="16" viewBox="0 0 16 16">
                <path d="M1.500 8V2.500h13v11H9M1.500 8.500h5v5h-5zM8 8l4-4M9 4.500h3v3" fill="none" stroke="#777" />
              </svg>
              <svg width="16" height="16" viewBox="0 0 16 16">
                <path d="M0 7h2v2H0zM7 7h2v2H7zM13 7h2v2h-2z" fill="#555" />
              </svg>
            </VisualTools>
            <Frame>
              <Handle $at="top: -1px; left: -2px;" $w={10} $h={9} $edges="4px 0 0 4px" />
              <Handle $at="top: -2px; left: 88px;" $w={12} $h={4} $edges="4px 0 0" />
              <Handle $at="top: -1px; right: -2px;" $w={10} $h={9} $edges="4px 4px 0 0" />
              <Handle $at="top: 224px; left: -2px;" $w={4} $h={12} $edges="0 0 0 4px" />
              <Handle $at="top: 224px; right: -2px;" $w={4} $h={12} $edges="0 4px 0 0" />
              <TableClip>
                <DataTable>
                  <thead>
                    <tr>
                      <Head $width={133}>Country</Head>
                      <Head $width={87}>Link</Head>
                    </tr>
                  </thead>
                  <tbody>
                    {countries.map(([name, rest], i) => (
                      <Row key={name} $odd={i % 2 === 1}>
                        <Cell>{name}</Cell>
                        <Cell>https:{rest && <><br />{rest}</>}</Cell>
                      </Row>
                    ))}
                  </tbody>
                </DataTable>
              </TableClip>
              <Scroll>
                <svg width="7" height="6" viewBox="0 0 7 6">
                  <path d="M.5 5l3-4 3 4" fill="none" stroke="#444" strokeWidth="1.200" />
                </svg>
                <Thumb />
              </Scroll>
            </Frame>
          </Visual>
        </Canvas>

        <FilterPane>
          <svg width="13" height="9" viewBox="0 0 13 9">
            <path d="M0 0l4 3 8-1.500V8.500L6 3" fill="none" stroke="#888" />
          </svg>
          <FilterTitle>FILTERS</FilterTitle>
        </FilterPane>

        <Pane>
          <VizGrid>
            {vizIcons.map((art, i) => (
              <VizButton key={i} $picked={i === 26} aria-label={`Visual ${i + 1}`}>
                <svg width="18" height="18" viewBox="0 0 18 18">{art}</svg>
              </VizButton>
            ))}
          </VizGrid>
          <PaneTabs>
            <PaneTab aria-label="Fields">
              <svg width="21" height="20" viewBox="0 0 21 20" fill="none" stroke="#fff">
                <path d="M0 .5h16" />
                <path d="M.5 3.500h19v6H.5zM.5 12.500h19v6H.5z" strokeDasharray="2 1" />
              </svg>
            </PaneTab>
            <PaneTab $active aria-label="Format">
              <svg width="20" height="20" viewBox="0 0 20 20" fill="none" stroke="#fff" strokeWidth="1.200">
                <path d="M1.500 .5h13v4h-13zM14.500 2.500h3v5h-9v3M6.500 10.500h4v9h-4z" />
              </svg>
            </PaneTab>
            <PaneTab aria-label="Analytics">
              <svg width="21" height="21" viewBox="0 0 21 21" fill="none" stroke="#fff" strokeWidth="1.200">
                <circle cx="9" cy="9" r="8" />
                <path d="M15 15l5 5M2 9l4-2 3 2 6-5M5.500 16v-5M8.500 16v-4M11.500 16v-6M14.500 14V8" />
              </svg>
            </PaneTab>
          </PaneTabs>
          <SearchBox $margin="4px 4px 5px">
            <MagnifierIcon />
            <SearchInput placeholder="Search" aria-label="Search options" />
          </SearchBox>
          {["General", "Style", "Grid", "Column headers"].map((name) => (
            <Section key={name}>
              <svg width="8" height="12" viewBox="0 0 8 12">
                <path d="M1 1l6 5-6 5" fill="none" stroke="#ddd" />
              </svg>
              {name}
            </Section>
          ))}
        </Pane>

        <Pane>
          <SearchBox $margin="-15px 3px 0 4px">
            <MagnifierIcon />
            <SearchInput placeholder="Search" aria-label="Search fields" />
          </SearchBox>
          <Rule />
          <TableHead>
            <svg width="6" height="6"><path d="M6 0v6H0z" fill="#bbb" /></svg>
            <svg width="13" height="12" viewBox="0 0 13 12">
              <path d="M0 0h13v12H0z" fill="#d6d6d6" />
              <path d="M0 3.500h13M0 6.500h13M0 9.500h13M4.500 3v9M8.500 3v9" stroke="#333" />
            </svg>
            Countries
          </TableHead>
          <FieldList>
            <Field>
              <Check type="checkbox" defaultChecked />
              <svg width="12" height="12" viewBox="0 0 12 12">
                <circle cx="6" cy="6" r="5.500" fill="#e6e6e6" />
                <path d="M0 6h12M1 3h10M1 9h10M6 0C2 4 2 8 6 12M6 0c4 4 4 8 0 12" stroke="#777" strokeWidth=".6" fill="none" />
              </svg>
              Country
            </Field>
            <Field $picked>
              <Check type="checkbox" defaultChecked />
              <svg width="12" height="12" viewBox="0 0 12 12">
                <path d="M1.500 0h9v12h-9z" fill="#ddd" />
                <path d="M3 2.500h6M3 5.500h6M3 7.500h6M3 9.500h6" stroke="#666" strokeDasharray="1.500 .7" />
              </svg>
              Link
              <Mark $inset="-7px -6px -6px -5px" />
            </Field>
          </FieldList>
        </Pane>
      </Body>
    </Shell>
  );
}

export default App;
